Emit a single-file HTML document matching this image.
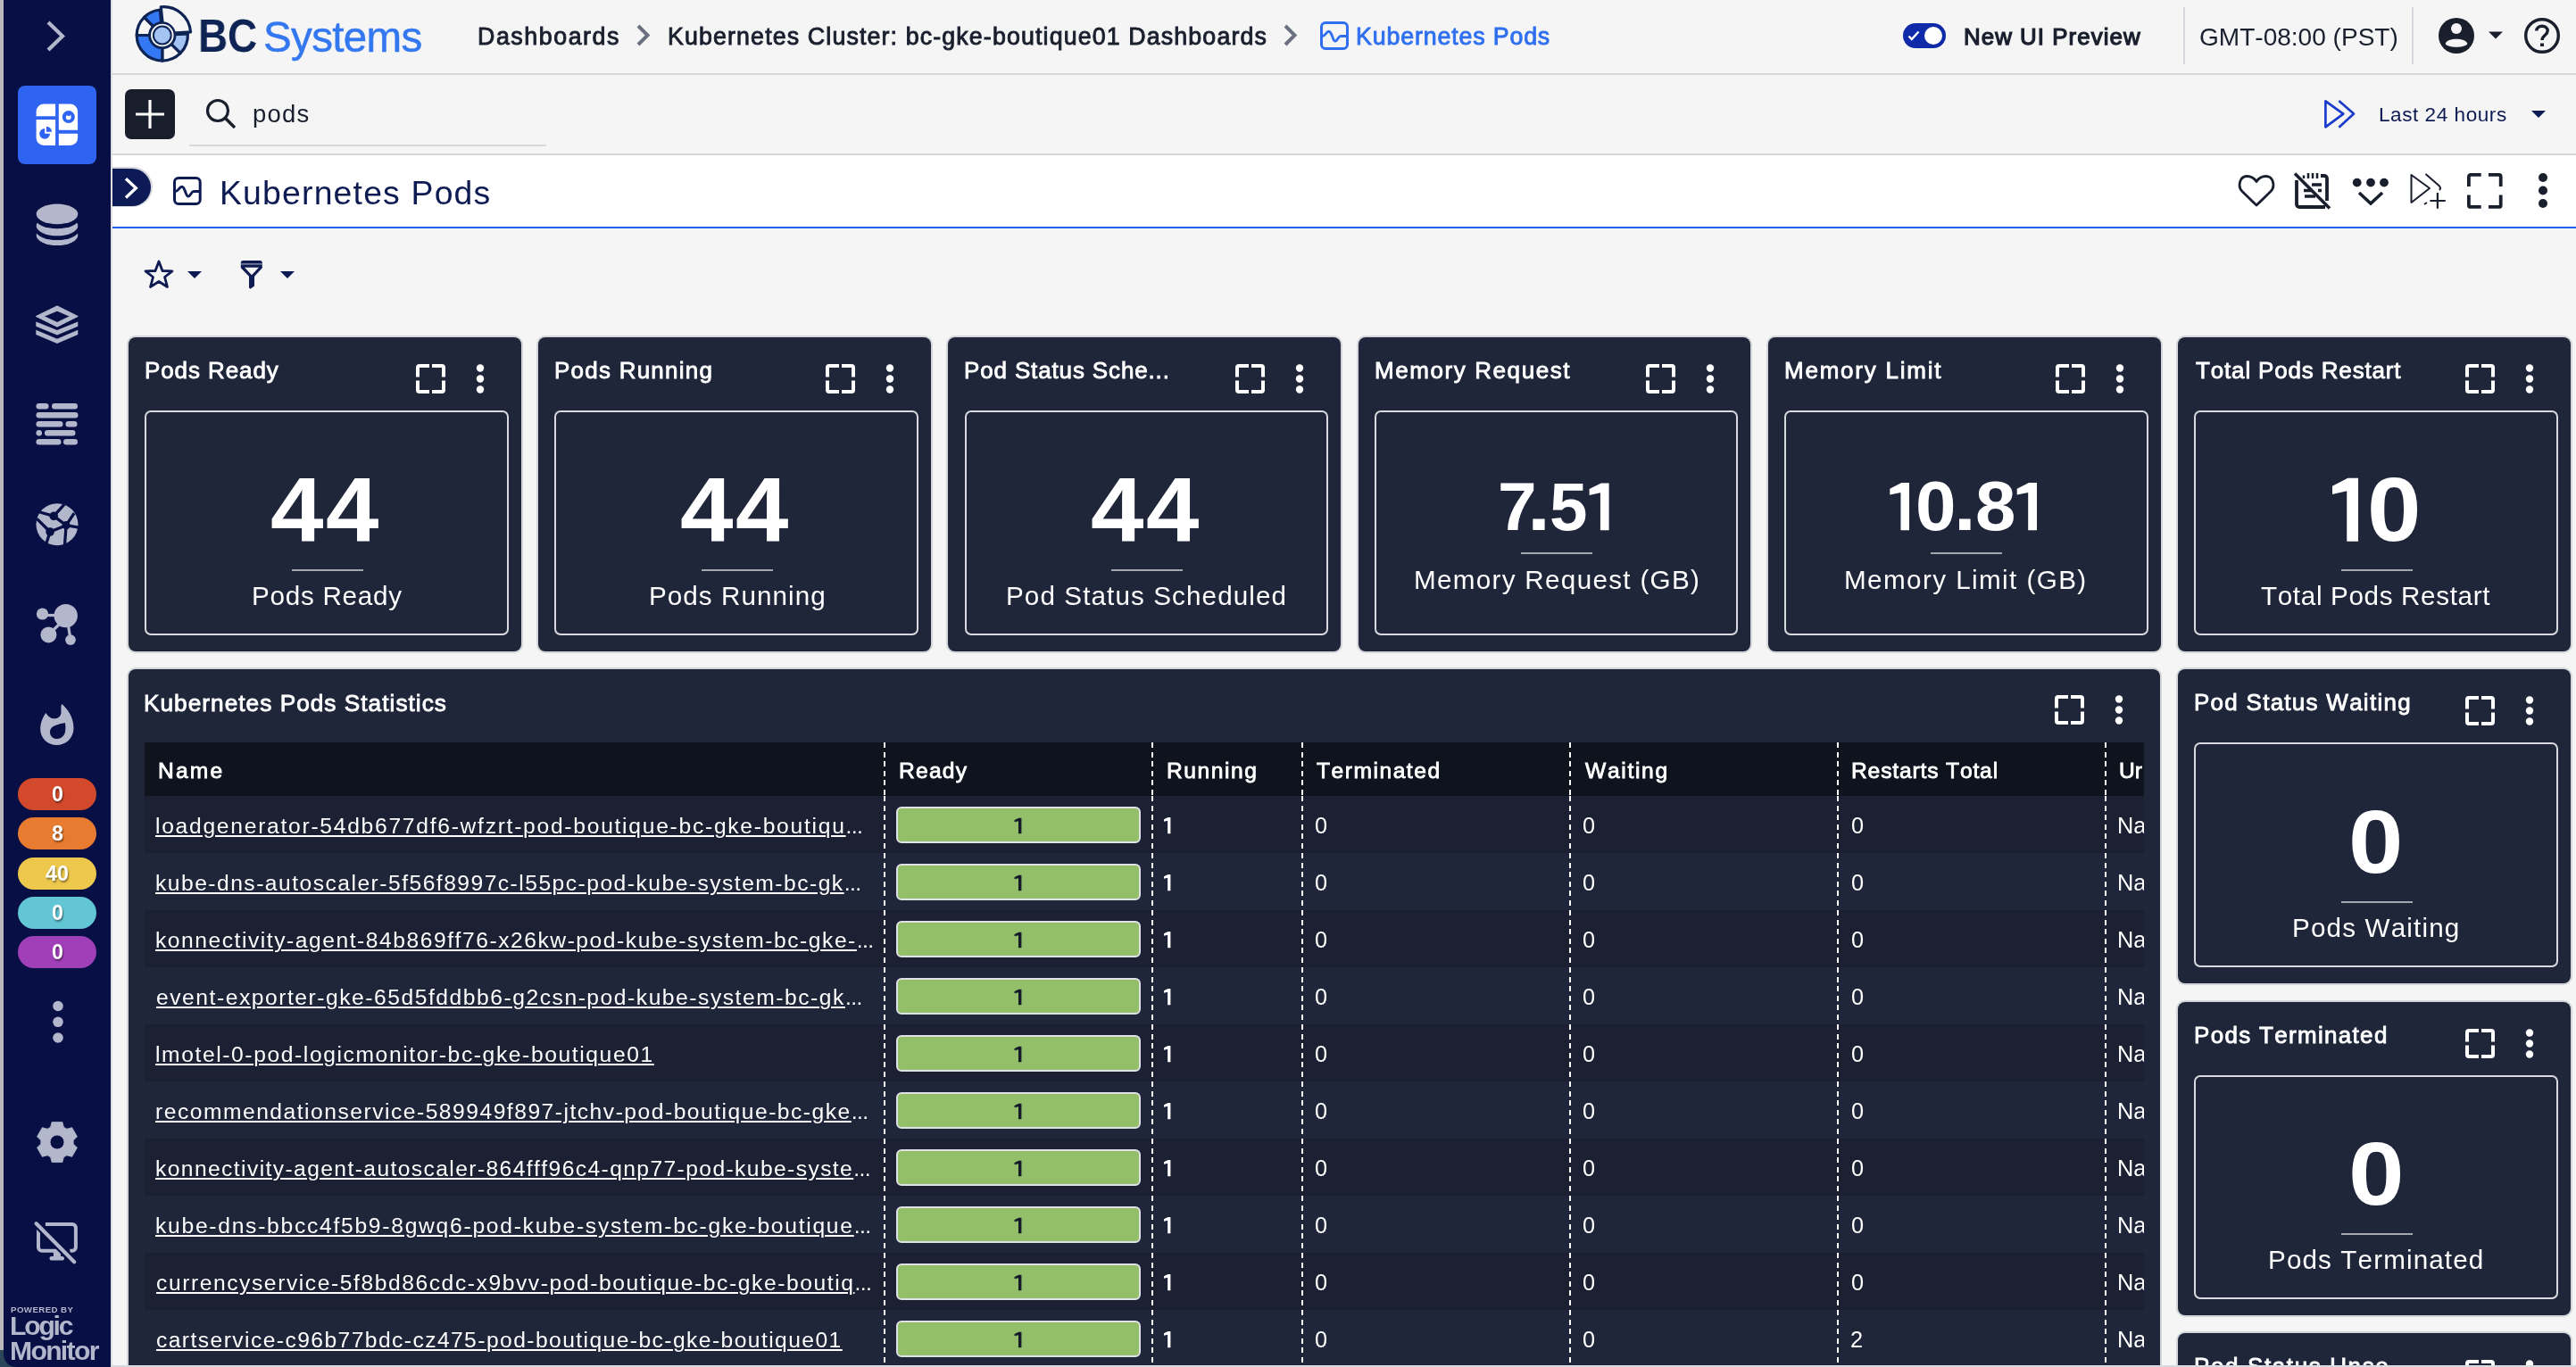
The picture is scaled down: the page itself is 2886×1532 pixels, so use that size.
<!DOCTYPE html>
<html><head><meta charset="utf-8"><style>
html,body{margin:0;padding:0;}
body{width:2886px;height:1532px;overflow:hidden;position:relative;background:#f5f5f5;font-family:"Liberation Sans",sans-serif;}
.t{position:absolute;white-space:nowrap;display:inline-block;font-kerning:none;will-change:transform;}
svg{overflow:visible}
</style></head><body>
<div style="position:absolute;left:0.00px;top:0.00px;width:4.00px;height:1532.00px;background:#b9b9bb"></div>
<div style="position:absolute;left:0.00px;top:1513.00px;width:24.00px;height:19.00px;background:#2b4659"></div>
<div style="position:absolute;left:4.00px;top:0.00px;width:120.00px;height:1532.00px;background:#070f45;border-bottom-left-radius:14px"></div>
<div style="position:absolute;left:124.00px;top:0.00px;width:2.00px;height:1532.00px;background:#dcdde2"></div>
<svg style="position:absolute;left:50.00px;top:22.00px" width="26" height="38" viewBox="0 0 26 38"><polyline points="4,3 20,18.5 4,34" fill="none" stroke="#b3b7cb" stroke-width="4.2"/></svg>
<div style="position:absolute;left:20.00px;top:96.00px;width:88.00px;height:88.00px;background:#2f64f2;border-radius:8px"></div>
<svg style="position:absolute;left:40.00px;top:116.00px" width="48" height="48" viewBox="0 0 48 48">
<path d="M9.1 0.6 H22.1 V14.2 H0.6 V9.1 A8.5 8.5 0 0 1 9.1 0.6Z" fill="#fff"/>
<path d="M0.6 18.1 H22.1 V47.1 H9.1 A8.5 8.5 0 0 1 0.6 38.6Z" fill="#fff"/>
<path d="M25.8 0.6 H38.6 A8.5 8.5 0 0 1 47.1 9.1 V29.8 H25.8Z" fill="#fff"/>
<path d="M25.8 33.7 H47.1 V38.6 A8.5 8.5 0 0 1 38.6 47.1 H25.8Z" fill="#fff"/>
<path d="M10.1 27.9 A5.9 5.9 0 1 0 16 33.8 L10.1 33.8Z" fill="#2f64f2"/>
<path d="M12 25.7 A6 6 0 0 1 18 31.7 L12 31.7Z" fill="#2f64f2"/>
<circle cx="36.8" cy="15.1" r="7" fill="#2f64f2"/>
<path d="M34.6 13.2 C33.3 15 33.6 18.3 36.8 18.3 C40 18.3 40.3 15 39 12.5 L38 14.2 Z" fill="#fff"/>
</svg>
<svg style="position:absolute;left:40.00px;top:227.00px" width="48" height="50" viewBox="0 0 48 50">
<ellipse cx="24" cy="36.8" rx="23.3" ry="11.3" fill="#b3b7cb"/>
<ellipse cx="24" cy="30.8" rx="24.5" ry="11.3" fill="#070f45"/>
<ellipse cx="24" cy="26" rx="23.3" ry="11.3" fill="#b3b7cb"/>
<ellipse cx="24" cy="17.9" rx="24.5" ry="11.3" fill="#070f45"/>
<ellipse cx="24" cy="12.9" rx="23.3" ry="11.3" fill="#b3b7cb"/>
</svg>
<svg style="position:absolute;left:40.00px;top:342.00px" width="48" height="46" viewBox="0 0 48 46">
<path d="M24 0.9 L47.3 12.5 L24 24.2 L0.3 12.5Z M24 6.2 L9.1 12.5 L24 19.5 L38.5 12.5Z" fill="#b3b7cb" fill-rule="evenodd" stroke="#b3b7cb" stroke-width="1" stroke-linejoin="round"/>
<path d="M0.3 18.4 L24 28.1 L47.3 18.4 V23.7 L24 33.4 L0.3 23.7Z" fill="#b3b7cb"/>
<path d="M0.3 27.7 L24 37.8 L47.3 27.7 V32.9 L24 43 L0.3 32.9Z" fill="#b3b7cb"/>
</svg>
<svg style="position:absolute;left:40.00px;top:451.00px" width="48" height="50" viewBox="0 0 48 50">
<g fill="#b3b7cb">
<rect x="0.5" y="1" width="14" height="6.5" rx="3.2"/><rect x="18" y="1" width="29" height="6.5" rx="3.2"/>
<rect x="0.5" y="11" width="47" height="6.5" rx="3.2"/>
<rect x="0.5" y="21" width="30" height="6.5" rx="3.2"/><rect x="33.5" y="21" width="13" height="6.5" rx="3.2"/>
<rect x="0.5" y="31" width="6.5" height="6.5" rx="3.2"/><rect x="10" y="31" width="34.5" height="6.5" rx="3.2"/>
<rect x="0.5" y="41" width="28" height="6.5" rx="3.2"/><rect x="31" y="41" width="16" height="6.5" rx="3.2"/>
</g></svg>
<svg style="position:absolute;left:40.00px;top:563.00px" width="48" height="50" viewBox="0 0 48 50">
<circle cx="24" cy="24.7" r="23.5" fill="#b3b7cb"/>
<g stroke="#070f45" stroke-width="3.3" fill="none" stroke-linecap="butt">
<path d="M20.2 15.4 L3 10.5 M20.2 15.4 L32 2.3 M20.2 15.4 L34.1 25.7 M34.1 25.7 L43.1 12.2 M34.1 25.7 L48 28.1 M34.1 25.7 L32.5 48 M34.1 25.7 L16.1 33 M16.1 33 L1.3 18.3 M16.1 33 L11.6 47"/>
</g>
<g fill="#070f45"><circle cx="20.2" cy="15.4" r="4.8"/><circle cx="34.1" cy="25.7" r="4.6"/><circle cx="16.1" cy="33" r="4.8"/></g>
</svg>
<svg style="position:absolute;left:40.00px;top:676.00px" width="48" height="48" viewBox="0 0 48 48">
<g fill="#b3b7cb">
<circle cx="33.7" cy="14.1" r="13.2"/><circle cx="7.5" cy="12" r="6.6"/><circle cx="14.4" cy="35.4" r="9"/><circle cx="39" cy="41.1" r="5.9"/>
</g>
<g stroke="#b3b7cb" stroke-width="3.2"><line x1="7.5" y1="13.5" x2="25" y2="13.5"/><line x1="14.4" y1="35.4" x2="26" y2="24"/><line x1="36.5" y1="25" x2="39" y2="41"/></g>
</svg>
<svg style="position:absolute;left:44.00px;top:788.00px" width="40" height="50" viewBox="0 0 40 50">
<path d="M25.3 1 C31 6 38.5 15 38.5 28 C38.5 39 30 47 19.5 47 C9 47 1.2 39 1.2 29 C1.2 22 4 15.5 7.4 10.9 C9.5 14.5 12.5 17.3 17 17.3 C22 17.3 24.5 14 24.5 10 C24.5 6 24 3 25.3 1Z M28.9 22 C29.5 26 29.8 30 28.5 34 C26.5 39 22 40 19 40 C14.5 40 12 36 12 32.5 C12 27 17 25 21 24 C24 23 26.5 22.5 28.9 22Z" fill="#b3b7cb" fill-rule="evenodd"/>
</svg>
<div style="position:absolute;left:20.00px;top:872.00px;width:88.00px;height:36.00px;background:#d24a2b;border-radius:18px"></div>
<div style="position:absolute;left:20.00px;top:916.00px;width:88.00px;height:36.00px;background:#e77c30;border-radius:18px"></div>
<div style="position:absolute;left:20.00px;top:961.00px;width:88.00px;height:36.00px;background:#edc84c;border-radius:18px"></div>
<div style="position:absolute;left:20.00px;top:1005.00px;width:88.00px;height:36.00px;background:#63c6d4;border-radius:18px"></div>
<div style="position:absolute;left:20.00px;top:1049.00px;width:88.00px;height:36.00px;background:#a13fb9;border-radius:18px"></div>
<span class="t" style="left:57.55px;top:879.21px;font-size:23.256px;line-height:23.256px;color:#fff;font-weight:bold;letter-spacing:0.000px;text-shadow:1px 2px 2px rgba(0,0,0,.45);">0</span>
<span class="t" style="left:57.52px;top:923.21px;font-size:23.256px;line-height:23.256px;color:#fff;font-weight:bold;letter-spacing:0.000px;text-shadow:1px 2px 2px rgba(0,0,0,.45);">8</span>
<span class="t" style="left:51.37px;top:968.21px;font-size:23.256px;line-height:23.256px;color:#fff;font-weight:bold;letter-spacing:0.000px;text-shadow:1px 2px 2px rgba(0,0,0,.45);">40</span>
<span class="t" style="left:57.55px;top:1012.21px;font-size:23.256px;line-height:23.256px;color:#fff;font-weight:bold;letter-spacing:0.000px;text-shadow:1px 2px 2px rgba(0,0,0,.45);">0</span>
<span class="t" style="left:57.55px;top:1056.21px;font-size:23.256px;line-height:23.256px;color:#fff;font-weight:bold;letter-spacing:0.000px;text-shadow:1px 2px 2px rgba(0,0,0,.45);">0</span>
<svg style="position:absolute;left:59.00px;top:1121.00px" width="12" height="50" viewBox="0 0 12 50"><g fill="#b3b7cb"><circle cx="6" cy="6.5" r="5.8"/><circle cx="6" cy="24.3" r="5.8"/><circle cx="6" cy="42" r="5.8"/></g></svg>
<svg style="position:absolute;left:40.00px;top:1256.00px" width="48" height="48" viewBox="0 0 48 48"><path fill="#b3b7cb" fill-rule="evenodd" stroke="#b3b7cb" stroke-width="0.8" stroke-linejoin="round" d="M16.56 7.28 L18.17 1.44 L29.83 1.44 L31.44 7.28 L34.76 9.19 L40.62 7.67 L46.45 17.77 L42.20 22.09 L42.20 25.91 L46.45 30.23 L40.62 40.33 L34.76 38.81 L31.44 40.72 L29.83 46.56 L18.17 46.56 L16.56 40.72 L13.24 38.81 L7.38 40.33 L1.55 30.23 L5.80 25.91 L5.80 22.09 L1.55 17.77 L7.38 7.67 L13.24 9.19Z M24 16.1 A7.9 7.9 0 1 0 24.01 16.1Z"/></svg>
<svg style="position:absolute;left:38.00px;top:1368.00px" width="50" height="50" viewBox="0 0 50 50">
<g fill="none" stroke="#b3b7cb" stroke-width="4">
<path d="M12.9 3.9 H43 A3.9 3.9 0 0 1 46.9 7.8 V29.8 A3.9 3.9 0 0 1 43 33.7 H40.3"/>
<path d="M5 7 V29.8 A3.9 3.9 0 0 0 8.9 33.7 H28.5"/>
</g>
<rect x="21.9" y="35" width="8.1" height="6" fill="#b3b7cb"/><rect x="17.5" y="40" width="16.5" height="4.5" rx="2" fill="#b3b7cb"/>
<line x1="2.6" y1="3.2" x2="45.2" y2="46.2" stroke="#070f45" stroke-width="9"/>
<line x1="2.6" y1="3.2" x2="45.2" y2="46.2" stroke="#b3b7cb" stroke-width="4.2" stroke-linecap="round"/>
</svg>
<span class="t" style="left:11.95px;top:1463.35px;font-size:9.738px;line-height:9.738px;color:#b3b7cb;font-weight:bold;letter-spacing:0.395px;">POWERED BY</span>
<span class="t" style="left:10.58px;top:1470.66px;font-size:30.160px;line-height:30.160px;color:#b3b7cb;font-weight:bold;letter-spacing:-2.230px;">Logic</span>
<span class="t" style="left:10.58px;top:1498.66px;font-size:30.160px;line-height:30.160px;color:#b3b7cb;font-weight:bold;letter-spacing:-1.696px;">Monitor</span>
<div style="position:absolute;left:126.00px;top:82.00px;width:2760.00px;height:2.00px;background:#d6d8dd"></div>
<svg style="position:absolute;left:148.00px;top:6.00px" width="68" height="68" viewBox="0 0 68 68"><g transform="translate(33.8,33.5)" stroke="#0e2454" stroke-width="3.2" stroke-linejoin="round"><path d="M-28.60 0.00 A28.60 28.60 0 0 1 -20.22 -20.22 L-9.90 -9.90 A14.00 14.00 0 0 0 -14.00 0.00 Z" fill="#f5f5f5"/><path d="M-20.22 -20.22 A28.60 28.60 0 0 1 -2.49 -28.49 L-1.22 -13.95 A14.00 14.00 0 0 0 -9.90 -9.90 Z" fill="#3478f5"/><path d="M28.56 -1.50 A28.60 28.60 0 0 1 20.22 20.22 L9.90 9.90 A14.00 14.00 0 0 0 13.98 -0.73 Z" fill="#a3c4f3"/><path d="M20.22 20.22 A28.60 28.60 0 0 1 0.00 28.60 L0.00 14.00 A14.00 14.00 0 0 0 9.90 9.90 Z" fill="#f5f5f5"/><path d="M0.00 28.60 A28.60 28.60 0 0 1 -28.60 0.00 L-14.00 0.00 A14.00 14.00 0 0 0 0.00 14.00 Z" fill="#3478f5"/><path d="M-1.56 -31.63 A30.20 30.20 0 0 1 31.73 -3.71 L11.58 -2.30 A10.00 10.00 0 0 0 0.55 -11.55 Z" fill="#f5f5f5"/>
<circle r="15.3" fill="#0e2454" stroke="none"/>
<circle r="12.8" fill="#f5f5f5" stroke="none"/>
<circle r="10.9" fill="#0e2454" stroke="none"/>
<circle r="8.9" fill="#a3c4f3" stroke="none"/>
</g></svg>
<span class="t" style="left:222.13px;top:15.40px;font-size:51.017px;line-height:51.017px;color:#0e2454;font-weight:bold;letter-spacing:0.000px;transform:scaleX(0.8987);transform-origin:0 0;">BC</span>
<span class="t" style="left:295.14px;top:18.42px;font-size:47.578px;line-height:47.578px;color:#3478f0;font-weight:normal;letter-spacing:-0.672px;-webkit-text-stroke:0.50px #3478f0;">Systems</span>
<span class="t" style="left:534.90px;top:28.33px;font-size:26.780px;line-height:26.780px;color:#1a1f2e;font-weight:normal;letter-spacing:1.563px;-webkit-text-stroke:0.90px #1a1f2e;">Dashboards</span>
<svg style="position:absolute;left:711.00px;top:26.00px" width="20" height="27" viewBox="0 0 20 27"><polyline points="4,3 14.5,13.5 4,24" fill="none" stroke="#6b7080" stroke-width="4"/></svg>
<span class="t" style="left:747.80px;top:28.33px;font-size:26.780px;line-height:26.780px;color:#1a1f2e;font-weight:normal;letter-spacing:1.136px;-webkit-text-stroke:0.90px #1a1f2e;">Kubernetes Cluster: bc-gke-boutique01 Dashboards</span>
<svg style="position:absolute;left:1436.00px;top:26.00px" width="20" height="27" viewBox="0 0 20 27"><polyline points="4,3 14.5,13.5 4,24" fill="none" stroke="#6b7080" stroke-width="4"/></svg>
<svg style="position:absolute;left:1478.00px;top:23.00px" width="34" height="34" viewBox="0 0 34 34"><rect x="2.5" y="2.5" width="29" height="29" rx="4.5" fill="none" stroke="#2f6ff0" stroke-width="3"/><path d="M3.9 17.3 C6.5 17.5 8 12.2 10.8 12.2 C14.5 12.2 14.8 23.1 17.8 23.1 C20.5 23.1 21 17.5 24 17.5 H30" fill="none" stroke="#2f6ff0" stroke-width="2.9"/></svg>
<span class="t" style="left:1519.30px;top:28.33px;font-size:26.780px;line-height:26.780px;color:#2f6ff0;font-weight:normal;letter-spacing:0.851px;-webkit-text-stroke:0.90px #2f6ff0;">Kubernetes Pods</span>
<div style="position:absolute;left:2132.00px;top:26.00px;width:48.00px;height:28.00px;background:#0f2aa8;border-radius:14px"></div>
<div style="position:absolute;left:2156.00px;top:30.00px;width:20.00px;height:20.00px;background:#fff;border-radius:10px"></div>
<svg style="position:absolute;left:2137.00px;top:34.00px" width="14" height="12" viewBox="0 0 14 12"><polyline points="1.5,6.5 4.8,10 12.5,1.5" fill="none" stroke="#fff" stroke-width="2.4"/></svg>
<span class="t" style="left:2199.78px;top:29.43px;font-size:25.828px;line-height:25.828px;color:#1a1f2e;font-weight:normal;letter-spacing:1.073px;-webkit-text-stroke:1.25px #1a1f2e;">New UI Preview</span>
<div style="position:absolute;left:2446.00px;top:8.00px;width:2.00px;height:64.00px;background:#d6d8dd"></div>
<span class="t" style="left:2463.89px;top:27.65px;font-size:28.052px;line-height:28.052px;color:#1a1f2e;font-weight:normal;letter-spacing:-0.003px;">GMT-08:00 (PST)</span>
<div style="position:absolute;left:2702.00px;top:8.00px;width:2.00px;height:64.00px;background:#d6d8dd"></div>
<svg style="position:absolute;left:2731.00px;top:19.00px" width="42" height="42" viewBox="0 0 42 42"><circle cx="21" cy="21" r="20" fill="#1a1f2e"/><circle cx="21" cy="13" r="6" fill="#f5f5f5"/><path d="M8.7 30 C10 23 32 23 33.3 30 C31 35 11 35 8.7 30Z" fill="#f5f5f5"/></svg>
<svg style="position:absolute;left:2787.00px;top:35.00px" width="18" height="10" viewBox="0 0 18 10"><path d="M1 0.5 H17 L9 8.5Z" fill="#1a1f2e"/></svg>
<svg style="position:absolute;left:2827.00px;top:19.00px" width="42" height="42" viewBox="0 0 42 42"><circle cx="21" cy="21" r="18.3" fill="none" stroke="#1a1f2e" stroke-width="3.4"/><path d="M14.8 15.5 C14.8 8.5 27.2 8.5 27.2 15.5 C27.2 20.5 21 20.5 21 26" fill="none" stroke="#1a1f2e" stroke-width="3.4"/><rect x="19" y="29.5" width="4" height="3.5" fill="#1a1f2e"/></svg>
<div style="position:absolute;left:126.00px;top:172.00px;width:2760.00px;height:2.00px;background:#d6d8dd"></div>
<div style="position:absolute;left:140.00px;top:100.00px;width:56.00px;height:56.00px;background:#191e2c;border-radius:7px"></div>
<svg style="position:absolute;left:151.00px;top:111.00px" width="34" height="34" viewBox="0 0 34 34"><path d="M17 1 V33 M1 17 H33" stroke="#fff" stroke-width="3.2"/></svg>
<svg style="position:absolute;left:230.00px;top:110.00px" width="36" height="36" viewBox="0 0 36 36"><circle cx="14" cy="14" r="11.5" fill="none" stroke="#1a1f2e" stroke-width="3.2"/><line x1="22.5" y1="22.5" x2="33" y2="33" stroke="#1a1f2e" stroke-width="3.4"/></svg>
<span class="t" style="left:283.23px;top:114.35px;font-size:27.462px;line-height:27.462px;color:#1a1f2e;font-weight:normal;letter-spacing:1.237px;">pods</span>
<div style="position:absolute;left:212.00px;top:162.00px;width:400.00px;height:2.00px;background:#d6d8dd"></div>
<svg style="position:absolute;left:2602.00px;top:111.00px" width="38" height="34" viewBox="0 0 38 34"><path d="M3.4 2.3 L23.3 16.6 L3.4 31.3Z" fill="none" stroke="#1b3cc9" stroke-width="2.7" stroke-linejoin="round"/><polyline points="18.4,2 35,16.6 18.4,31.8" fill="none" stroke="#1b3cc9" stroke-width="2.7" stroke-linejoin="round"/></svg>
<span class="t" style="left:2664.75px;top:118.09px;font-size:22.566px;line-height:22.566px;color:#0d1b52;font-weight:normal;letter-spacing:0.544px;">Last 24 hours</span>
<svg style="position:absolute;left:2835.00px;top:123.00px" width="18" height="10" viewBox="0 0 18 10"><path d="M1 1 H17 L9 9Z" fill="#0d1b52"/></svg>
<div style="position:absolute;left:126.00px;top:174.00px;width:2760.00px;height:80.00px;background:#fff"></div>
<div style="position:absolute;left:126.00px;top:254.00px;width:2760.00px;height:2.00px;background:#2160f0"></div>
<div style="position:absolute;left:124.00px;top:187.40px;width:46.60px;height:45.00px;background:#d6d7dc;border-radius:0 23px 23px 0"></div>
<div style="position:absolute;left:124.00px;top:189.00px;width:44.90px;height:41.80px;background:#0c1a55;border-radius:0 21px 21px 0"></div>
<div style="position:absolute;left:124.00px;top:174.00px;width:1.50px;height:80.00px;background:#e0e0e4"></div>
<svg style="position:absolute;left:136.00px;top:196.00px" width="20" height="28" viewBox="0 0 20 28"><polyline points="5,4.2 16.3,14.8 5,25.4" fill="none" stroke="#fff" stroke-width="3.4"/></svg>
<svg style="position:absolute;left:193.00px;top:197.00px" width="34" height="34" viewBox="0 0 34 34"><rect x="2.5" y="2.5" width="28.7" height="28.9" rx="4.5" fill="none" stroke="#0d1b52" stroke-width="3"/><path d="M3.9 17.3 C6.5 17.5 8 12.2 10.8 12.2 C14.5 12.2 14.8 23.1 17.8 23.1 C20.5 23.1 21 17.5 24 17.5 H30" fill="none" stroke="#0d1b52" stroke-width="2.9"/></svg>
<span class="t" style="left:245.73px;top:197.55px;font-size:37.383px;line-height:37.383px;color:#0d1b52;font-weight:normal;letter-spacing:1.180px;">Kubernetes Pods</span>
<svg style="position:absolute;left:2506.00px;top:194.00px" width="44" height="40" viewBox="0 0 44 40"><path d="M22 36 L6 20.5 C1 15.5 2.5 3.5 11.5 3.5 C16.5 3.5 20 6.5 22 9.5 C24 6.5 27.5 3.5 32.5 3.5 C41.5 3.5 43 15.5 38 20.5Z" fill="none" stroke="#1a1f2e" stroke-width="2.8" stroke-linejoin="round"/></svg>
<svg style="position:absolute;left:2569.00px;top:192.00px" width="44" height="44" viewBox="0 0 44 44"><g fill="none" stroke="#1a1f2e"><path d="M31 5 H35 A3 3 0 0 1 38 8 V33" stroke-width="3.8"/><path d="M4 10 V37 A3 3 0 0 0 7 40 H36" stroke-width="3.8"/>
<path d="M12 4.5 V8 M17 2 V8 M22 2 V8 M27 2 V8" stroke-width="2.5"/><path d="M13 28 H25 M12 21.5 H22 M21 15 H32 M28 21.5 H32" stroke-width="3.4"/>
<line x1="2" y1="2.5" x2="41" y2="41.5" stroke-width="3.6"/></g></svg>
<svg style="position:absolute;left:2635.00px;top:198.00px" width="44" height="34" viewBox="0 0 44 34"><g fill="#1a1f2e"><circle cx="5.7" cy="6.6" r="4.9"/><circle cx="21" cy="6.6" r="4.9"/><circle cx="36" cy="6.6" r="4.9"/></g><polyline points="8,18 21,30 34,18" fill="none" stroke="#1a1f2e" stroke-width="3.6"/></svg>
<svg style="position:absolute;left:2699.00px;top:194.00px" width="44" height="42" viewBox="0 0 44 42"><g fill="none" stroke="#1a1f2e" stroke-width="2"><path d="M2.5 2 L23 17 L2.5 33Z" stroke-linejoin="round"/><path d="M18.5 1 L34 14.5 Q36 17 34 19" /><path d="M17 35 L20 33"/><path d="M23.4 31 H40.8 M31.9 22 V39.8" stroke-width="2.2"/></g></svg>
<svg style="position:absolute;left:2764.00px;top:194.00px" width="42" height="42" viewBox="0 0 42 42"><path d="M1.9 15 V3.9 A2 2 0 0 1 3.9 1.9 H15.7 M24 1.9 H35.7 A2 2 0 0 1 37.7 3.9 V15 M37.7 24.6 V35.9 A2 2 0 0 1 35.7 37.9 H24 M15.7 37.9 H3.9 A2 2 0 0 1 1.9 35.9 V24.6" fill="none" stroke="#1a1f2e" stroke-width="3.8"/></svg>
<svg style="position:absolute;left:2843.00px;top:193.00px" width="12" height="42" viewBox="0 0 12 42"><g fill="#1a1f2e"><circle cx="6" cy="6" r="5"/><circle cx="6" cy="20.5" r="5"/><circle cx="6" cy="35" r="5"/></g></svg>
<svg style="position:absolute;left:160.00px;top:290.00px" width="36" height="36" viewBox="0 0 36 36"><path d="M18 3 L22 13.5 L33 13.8 L24.5 20.5 L27.5 31.5 L18 25.5 L8.5 31.5 L11.5 20.5 L3 13.8 L14 13.5Z" fill="none" stroke="#0d1b52" stroke-width="2.8" stroke-linejoin="round"/></svg>
<svg style="position:absolute;left:209.00px;top:303.00px" width="18" height="10" viewBox="0 0 18 10"><path d="M1 1 H17 L9 9Z" fill="#0d1b52"/></svg>
<svg style="position:absolute;left:268.00px;top:290.00px" width="28" height="36" viewBox="0 0 28 36"><path d="M1.8 4.5 A2.5 2.5 0 0 1 4.3 2 H23.3 A2.5 2.5 0 0 1 25.8 4.5 V10.3 L17 19.8 V30.5 L12.6 33.8 L11 32.4 V19.8 L1.8 10.3Z M6 9.7 L14 18.3 L22 9.7Z" fill="#0d1b52" fill-rule="evenodd"/><rect x="1.8" y="5.5" width="24" height="0.9" fill="#cfd1db"/></svg>
<svg style="position:absolute;left:313.00px;top:303.00px" width="18" height="10" viewBox="0 0 18 10"><path d="M1 1 H17 L9 9Z" fill="#0d1b52"/></svg>
<div style="position:absolute;left:144.00px;top:378.00px;width:439.80px;height:351.70px;background:#1f263a;border-radius:8px;box-shadow:0 0 0 2px #d3d5da"></div>
<span class="t" style="left:161.97px;top:403.42px;font-size:25.964px;line-height:25.964px;color:#fff;font-weight:normal;letter-spacing:0.937px;-webkit-text-stroke:0.85px #fff;">Pods Ready</span>
<svg style="position:absolute;left:466.00px;top:408.00px" width="33" height="33" viewBox="0 0 33 33"><path d="M2 14.5 V4 A2 2 0 0 1 4 2 H15 M18 2 H29 A2 2 0 0 1 31 4 V14.5 M31 18.5 V29 A2 2 0 0 1 29 31 H18 M15 31 H4 A2 2 0 0 1 2 29 V18.5" fill="none" stroke="#fff" stroke-width="4"/></svg>
<svg style="position:absolute;left:533.00px;top:408.00px" width="10" height="33" viewBox="0 0 10 33"><g fill="#fff"><circle cx="5" cy="4.5" r="4.2"/><circle cx="5" cy="16.5" r="4.2"/><circle cx="5" cy="28.5" r="4.2"/></g></svg>
<div style="position:absolute;left:162.20px;top:460.00px;width:407.50px;height:251.80px;border:2px solid #d9dadf;border-radius:7px;box-sizing:border-box"></div>
<div style="position:absolute;left:326.50px;top:637.90px;width:80.00px;height:2.20px;background:#a4a7b0"></div>
<span class="t" style="left:281.77px;top:653.31px;font-size:29.634px;line-height:29.634px;color:#fff;font-weight:normal;letter-spacing:0.728px;">Pods Ready</span>
<div style="position:absolute;left:603.20px;top:378.00px;width:439.80px;height:351.70px;background:#1f263a;border-radius:8px;box-shadow:0 0 0 2px #d3d5da"></div>
<span class="t" style="left:621.17px;top:403.42px;font-size:25.964px;line-height:25.964px;color:#fff;font-weight:normal;letter-spacing:1.254px;-webkit-text-stroke:0.85px #fff;">Pods Running</span>
<svg style="position:absolute;left:925.20px;top:408.00px" width="33" height="33" viewBox="0 0 33 33"><path d="M2 14.5 V4 A2 2 0 0 1 4 2 H15 M18 2 H29 A2 2 0 0 1 31 4 V14.5 M31 18.5 V29 A2 2 0 0 1 29 31 H18 M15 31 H4 A2 2 0 0 1 2 29 V18.5" fill="none" stroke="#fff" stroke-width="4"/></svg>
<svg style="position:absolute;left:992.20px;top:408.00px" width="10" height="33" viewBox="0 0 10 33"><g fill="#fff"><circle cx="5" cy="4.5" r="4.2"/><circle cx="5" cy="16.5" r="4.2"/><circle cx="5" cy="28.5" r="4.2"/></g></svg>
<div style="position:absolute;left:621.40px;top:460.00px;width:407.50px;height:251.80px;border:2px solid #d9dadf;border-radius:7px;box-sizing:border-box"></div>
<div style="position:absolute;left:785.70px;top:637.90px;width:80.00px;height:2.20px;background:#a4a7b0"></div>
<span class="t" style="left:726.87px;top:653.31px;font-size:29.634px;line-height:29.634px;color:#fff;font-weight:normal;letter-spacing:1.052px;">Pods Running</span>
<div style="position:absolute;left:1062.40px;top:378.00px;width:439.80px;height:351.70px;background:#1f263a;border-radius:8px;box-shadow:0 0 0 2px #d3d5da"></div>
<span class="t" style="left:1080.37px;top:403.42px;font-size:25.964px;line-height:25.964px;color:#fff;font-weight:normal;letter-spacing:0.879px;-webkit-text-stroke:0.85px #fff;">Pod Status Sche...</span>
<svg style="position:absolute;left:1384.40px;top:408.00px" width="33" height="33" viewBox="0 0 33 33"><path d="M2 14.5 V4 A2 2 0 0 1 4 2 H15 M18 2 H29 A2 2 0 0 1 31 4 V14.5 M31 18.5 V29 A2 2 0 0 1 29 31 H18 M15 31 H4 A2 2 0 0 1 2 29 V18.5" fill="none" stroke="#fff" stroke-width="4"/></svg>
<svg style="position:absolute;left:1451.40px;top:408.00px" width="10" height="33" viewBox="0 0 10 33"><g fill="#fff"><circle cx="5" cy="4.5" r="4.2"/><circle cx="5" cy="16.5" r="4.2"/><circle cx="5" cy="28.5" r="4.2"/></g></svg>
<div style="position:absolute;left:1080.60px;top:460.00px;width:407.50px;height:251.80px;border:2px solid #d9dadf;border-radius:7px;box-sizing:border-box"></div>
<div style="position:absolute;left:1244.90px;top:637.90px;width:80.00px;height:2.20px;background:#a4a7b0"></div>
<span class="t" style="left:1127.17px;top:653.31px;font-size:29.634px;line-height:29.634px;color:#fff;font-weight:normal;letter-spacing:1.099px;">Pod Status Scheduled</span>
<div style="position:absolute;left:1521.60px;top:378.00px;width:439.80px;height:351.70px;background:#1f263a;border-radius:8px;box-shadow:0 0 0 2px #d3d5da"></div>
<span class="t" style="left:1539.57px;top:403.42px;font-size:25.964px;line-height:25.964px;color:#fff;font-weight:normal;letter-spacing:1.610px;-webkit-text-stroke:0.85px #fff;">Memory Request</span>
<svg style="position:absolute;left:1843.60px;top:408.00px" width="33" height="33" viewBox="0 0 33 33"><path d="M2 14.5 V4 A2 2 0 0 1 4 2 H15 M18 2 H29 A2 2 0 0 1 31 4 V14.5 M31 18.5 V29 A2 2 0 0 1 29 31 H18 M15 31 H4 A2 2 0 0 1 2 29 V18.5" fill="none" stroke="#fff" stroke-width="4"/></svg>
<svg style="position:absolute;left:1910.60px;top:408.00px" width="10" height="33" viewBox="0 0 10 33"><g fill="#fff"><circle cx="5" cy="4.5" r="4.2"/><circle cx="5" cy="16.5" r="4.2"/><circle cx="5" cy="28.5" r="4.2"/></g></svg>
<div style="position:absolute;left:1539.80px;top:460.00px;width:407.50px;height:251.80px;border:2px solid #d9dadf;border-radius:7px;box-sizing:border-box"></div>
<div style="position:absolute;left:1704.10px;top:619.00px;width:80.00px;height:2.20px;background:#a4a7b0"></div>
<span class="t" style="left:1584.07px;top:634.61px;font-size:29.634px;line-height:29.634px;color:#fff;font-weight:normal;letter-spacing:1.308px;">Memory Request (GB)</span>
<div style="position:absolute;left:1980.80px;top:378.00px;width:439.80px;height:351.70px;background:#1f263a;border-radius:8px;box-shadow:0 0 0 2px #d3d5da"></div>
<span class="t" style="left:1998.77px;top:403.42px;font-size:25.964px;line-height:25.964px;color:#fff;font-weight:normal;letter-spacing:1.802px;-webkit-text-stroke:0.85px #fff;">Memory Limit</span>
<svg style="position:absolute;left:2302.80px;top:408.00px" width="33" height="33" viewBox="0 0 33 33"><path d="M2 14.5 V4 A2 2 0 0 1 4 2 H15 M18 2 H29 A2 2 0 0 1 31 4 V14.5 M31 18.5 V29 A2 2 0 0 1 29 31 H18 M15 31 H4 A2 2 0 0 1 2 29 V18.5" fill="none" stroke="#fff" stroke-width="4"/></svg>
<svg style="position:absolute;left:2369.80px;top:408.00px" width="10" height="33" viewBox="0 0 10 33"><g fill="#fff"><circle cx="5" cy="4.5" r="4.2"/><circle cx="5" cy="16.5" r="4.2"/><circle cx="5" cy="28.5" r="4.2"/></g></svg>
<div style="position:absolute;left:1999.00px;top:460.00px;width:407.50px;height:251.80px;border:2px solid #d9dadf;border-radius:7px;box-sizing:border-box"></div>
<div style="position:absolute;left:2163.30px;top:619.00px;width:80.00px;height:2.20px;background:#a4a7b0"></div>
<span class="t" style="left:2066.17px;top:634.61px;font-size:29.634px;line-height:29.634px;color:#fff;font-weight:normal;letter-spacing:1.416px;">Memory Limit (GB)</span>
<div style="position:absolute;left:2440.00px;top:378.00px;width:439.80px;height:351.70px;background:#1f263a;border-radius:8px;box-shadow:0 0 0 2px #d3d5da"></div>
<span class="t" style="left:2459.52px;top:403.42px;font-size:25.964px;line-height:25.964px;color:#fff;font-weight:normal;letter-spacing:0.862px;-webkit-text-stroke:0.85px #fff;">Total Pods Restart</span>
<svg style="position:absolute;left:2762.00px;top:408.00px" width="33" height="33" viewBox="0 0 33 33"><path d="M2 14.5 V4 A2 2 0 0 1 4 2 H15 M18 2 H29 A2 2 0 0 1 31 4 V14.5 M31 18.5 V29 A2 2 0 0 1 29 31 H18 M15 31 H4 A2 2 0 0 1 2 29 V18.5" fill="none" stroke="#fff" stroke-width="4"/></svg>
<svg style="position:absolute;left:2829.00px;top:408.00px" width="10" height="33" viewBox="0 0 10 33"><g fill="#fff"><circle cx="5" cy="4.5" r="4.2"/><circle cx="5" cy="16.5" r="4.2"/><circle cx="5" cy="28.5" r="4.2"/></g></svg>
<div style="position:absolute;left:2458.20px;top:460.00px;width:407.50px;height:251.80px;border:2px solid #d9dadf;border-radius:7px;box-sizing:border-box"></div>
<div style="position:absolute;left:2622.50px;top:637.90px;width:80.00px;height:2.20px;background:#a4a7b0"></div>
<span class="t" style="left:2533.33px;top:653.31px;font-size:29.634px;line-height:29.634px;color:#fff;font-weight:normal;letter-spacing:0.651px;">Total Pods Restart</span>
<span class="t" style="left:303.28px;top:520.75px;font-size:101.746px;line-height:101.746px;color:#fff;font-weight:bold;transform:scaleX(1.0514);transform-origin:0 0">4</span>
<span class="t" style="left:365.18px;top:520.75px;font-size:101.746px;line-height:101.746px;color:#fff;font-weight:bold;transform:scaleX(1.0495);transform-origin:0 0">4</span>
<span class="t" style="left:762.48px;top:520.75px;font-size:101.746px;line-height:101.746px;color:#fff;font-weight:bold;transform:scaleX(1.0514);transform-origin:0 0">4</span>
<span class="t" style="left:824.38px;top:520.75px;font-size:101.746px;line-height:101.746px;color:#fff;font-weight:bold;transform:scaleX(1.0495);transform-origin:0 0">4</span>
<span class="t" style="left:1221.68px;top:520.75px;font-size:101.746px;line-height:101.746px;color:#fff;font-weight:bold;transform:scaleX(1.0514);transform-origin:0 0">4</span>
<span class="t" style="left:1283.58px;top:520.75px;font-size:101.746px;line-height:101.746px;color:#fff;font-weight:bold;transform:scaleX(1.0495);transform-origin:0 0">4</span>
<span class="t" style="left:1678.33px;top:529.97px;font-size:76.455px;line-height:76.455px;color:#fff;font-weight:bold;transform:scaleX(1.0258);transform-origin:0 0">7</span>
<span class="t" style="left:1711.05px;top:524.77px;font-size:82.591px;line-height:82.591px;color:#fff;font-weight:bold;transform:scaleX(1.1326);transform-origin:0 0">.</span>
<span class="t" style="left:1735.55px;top:529.98px;font-size:76.388px;line-height:76.388px;color:#fff;font-weight:bold;transform:scaleX(0.9998);transform-origin:0 0">5</span>
<svg style="position:absolute;left:0;top:0;overflow:visible" width="1" height="1"><polygon points="1793.80,541.50 1802.60,541.50 1802.60,594.30 1792.92,594.30 1792.92,552.32 1780.60,554.96 1780.60,548.10" fill="#fff"/></svg>
<svg style="position:absolute;left:0;top:0;overflow:visible" width="1" height="1"><polygon points="2130.32,541.00 2139.00,541.00 2139.00,594.30 2129.45,594.30 2129.45,551.93 2117.30,554.59 2117.30,547.66" fill="#fff"/></svg>
<span class="t" style="left:2146.46px;top:529.47px;font-size:76.977px;line-height:76.977px;color:#fff;font-weight:bold;transform:scaleX(1.0626);transform-origin:0 0">0</span>
<span class="t" style="left:2189.39px;top:524.77px;font-size:82.591px;line-height:82.591px;color:#fff;font-weight:bold;transform:scaleX(1.0725);transform-origin:0 0">.</span>
<span class="t" style="left:2212.71px;top:529.47px;font-size:76.977px;line-height:76.977px;color:#fff;font-weight:bold;transform:scaleX(1.0605);transform-origin:0 0">8</span>
<svg style="position:absolute;left:0;top:0;overflow:visible" width="1" height="1"><polygon points="2273.08,541.00 2282.00,541.00 2282.00,594.30 2272.19,594.30 2272.19,551.93 2259.70,554.59 2259.70,547.66" fill="#fff"/></svg>
<svg style="position:absolute;left:0;top:0;overflow:visible" width="1" height="1"><polygon points="2630.40,535.80 2642.00,535.80 2642.00,606.70 2629.24,606.70 2629.24,550.33 2613.00,553.88 2613.00,544.66" fill="#fff"/></svg>
<span class="t" style="left:2651.60px;top:520.20px;font-size:102.400px;line-height:102.400px;color:#fff;font-weight:bold;transform:scaleX(1.0616);transform-origin:0 0">0</span>
<div style="position:absolute;left:2440.00px;top:750.00px;width:439.80px;height:351.70px;background:#1f263a;border-radius:8px;box-shadow:0 0 0 2px #d3d5da"></div>
<span class="t" style="left:2457.97px;top:775.42px;font-size:25.964px;line-height:25.964px;color:#fff;font-weight:normal;letter-spacing:1.288px;-webkit-text-stroke:0.85px #fff;">Pod Status Waiting</span>
<svg style="position:absolute;left:2762.00px;top:780.00px" width="33" height="33" viewBox="0 0 33 33"><path d="M2 14.5 V4 A2 2 0 0 1 4 2 H15 M18 2 H29 A2 2 0 0 1 31 4 V14.5 M31 18.5 V29 A2 2 0 0 1 29 31 H18 M15 31 H4 A2 2 0 0 1 2 29 V18.5" fill="none" stroke="#fff" stroke-width="4"/></svg>
<svg style="position:absolute;left:2829.00px;top:780.00px" width="10" height="33" viewBox="0 0 10 33"><g fill="#fff"><circle cx="5" cy="4.5" r="4.2"/><circle cx="5" cy="16.5" r="4.2"/><circle cx="5" cy="28.5" r="4.2"/></g></svg>
<div style="position:absolute;left:2458.20px;top:832.00px;width:407.50px;height:251.80px;border:2px solid #d9dadf;border-radius:7px;box-sizing:border-box"></div>
<div style="position:absolute;left:2622.50px;top:1009.50px;width:80.00px;height:2.20px;background:#a4a7b0"></div>
<span class="t" style="left:2568.27px;top:1025.31px;font-size:29.634px;line-height:29.634px;color:#fff;font-weight:normal;letter-spacing:1.159px;">Pods Waiting</span>
<span class="t" style="left:2631.13px;top:892.89px;font-size:100.423px;line-height:100.423px;color:#fff;font-weight:bold;transform:scaleX(1.0993);transform-origin:0 0">0</span>
<div style="position:absolute;left:2440.00px;top:1122.50px;width:439.80px;height:351.70px;background:#1f263a;border-radius:8px;box-shadow:0 0 0 2px #d3d5da"></div>
<span class="t" style="left:2457.97px;top:1147.92px;font-size:25.964px;line-height:25.964px;color:#fff;font-weight:normal;letter-spacing:1.335px;-webkit-text-stroke:0.85px #fff;">Pods Terminated</span>
<svg style="position:absolute;left:2762.00px;top:1152.50px" width="33" height="33" viewBox="0 0 33 33"><path d="M2 14.5 V4 A2 2 0 0 1 4 2 H15 M18 2 H29 A2 2 0 0 1 31 4 V14.5 M31 18.5 V29 A2 2 0 0 1 29 31 H18 M15 31 H4 A2 2 0 0 1 2 29 V18.5" fill="none" stroke="#fff" stroke-width="4"/></svg>
<svg style="position:absolute;left:2829.00px;top:1152.50px" width="10" height="33" viewBox="0 0 10 33"><g fill="#fff"><circle cx="5" cy="4.5" r="4.2"/><circle cx="5" cy="16.5" r="4.2"/><circle cx="5" cy="28.5" r="4.2"/></g></svg>
<div style="position:absolute;left:2458.20px;top:1204.50px;width:407.50px;height:251.80px;border:2px solid #d9dadf;border-radius:7px;box-sizing:border-box"></div>
<div style="position:absolute;left:2622.50px;top:1381.80px;width:80.00px;height:2.20px;background:#a4a7b0"></div>
<span class="t" style="left:2541.37px;top:1397.31px;font-size:29.634px;line-height:29.634px;color:#fff;font-weight:normal;letter-spacing:1.120px;">Pods Terminated</span>
<span class="t" style="left:2630.94px;top:1266.36px;font-size:99.293px;line-height:99.293px;color:#fff;font-weight:bold;transform:scaleX(1.1351);transform-origin:0 0">0</span>
<div style="position:absolute;left:2440.00px;top:1494.00px;width:439.80px;height:200.00px;background:#1f263a;border-radius:8px;box-shadow:0 0 0 2px #d3d5da"></div>
<span class="t" style="left:2457.97px;top:1519.42px;font-size:25.964px;line-height:25.964px;color:#fff;font-weight:normal;letter-spacing:1.642px;-webkit-text-stroke:0.85px #fff;">Pod Status Unse...</span>
<svg style="position:absolute;left:2762.00px;top:1524.00px" width="33" height="33" viewBox="0 0 33 33"><path d="M2 14.5 V4 A2 2 0 0 1 4 2 H15 M18 2 H29 A2 2 0 0 1 31 4 V14.5 M31 18.5 V29 A2 2 0 0 1 29 31 H18 M15 31 H4 A2 2 0 0 1 2 29 V18.5" fill="none" stroke="#fff" stroke-width="4"/></svg>
<svg style="position:absolute;left:2829.00px;top:1524.00px" width="10" height="33" viewBox="0 0 10 33"><g fill="#fff"><circle cx="5" cy="4.5" r="4.2"/><circle cx="5" cy="16.5" r="4.2"/><circle cx="5" cy="28.5" r="4.2"/></g></svg>
<div style="position:absolute;left:144.00px;top:750.00px;width:2276.00px;height:900.00px;background:#1f263a;border-radius:8px;box-shadow:0 0 0 2px #d3d5da"></div>
<span class="t" style="left:160.85px;top:775.19px;font-size:26.236px;line-height:26.236px;color:#fff;font-weight:normal;letter-spacing:1.023px;-webkit-text-stroke:0.85px #fff;">Kubernetes Pods Statistics</span>
<svg style="position:absolute;left:2301.50px;top:779.00px" width="33" height="33" viewBox="0 0 33 33"><path d="M2 14.5 V4 A2 2 0 0 1 4 2 H15 M18 2 H29 A2 2 0 0 1 31 4 V14.5 M31 18.5 V29 A2 2 0 0 1 29 31 H18 M15 31 H4 A2 2 0 0 1 2 29 V18.5" fill="none" stroke="#fff" stroke-width="4"/></svg>
<svg style="position:absolute;left:2369.00px;top:779.00px" width="10" height="33" viewBox="0 0 10 33"><g fill="#fff"><circle cx="5" cy="4.5" r="4.2"/><circle cx="5" cy="16.5" r="4.2"/><circle cx="5" cy="28.5" r="4.2"/></g></svg>
<div style="position:absolute;left:162.00px;top:832.00px;width:2240.00px;height:60.00px;background:#0f131e"></div>
<span class="t" style="left:176.98px;top:851.87px;font-size:24.605px;line-height:24.605px;color:#fff;font-weight:normal;letter-spacing:2.160px;-webkit-text-stroke:0.85px #fff;">Name</span>
<span class="t" style="left:1006.98px;top:851.87px;font-size:24.605px;line-height:24.605px;color:#fff;font-weight:normal;letter-spacing:1.236px;-webkit-text-stroke:0.85px #fff;">Ready</span>
<span class="t" style="left:1306.68px;top:851.87px;font-size:24.605px;line-height:24.605px;color:#fff;font-weight:normal;letter-spacing:1.542px;-webkit-text-stroke:0.85px #fff;">Running</span>
<span class="t" style="left:1475.45px;top:851.87px;font-size:24.605px;line-height:24.605px;color:#fff;font-weight:normal;letter-spacing:1.522px;-webkit-text-stroke:0.85px #fff;">Terminated</span>
<span class="t" style="left:1775.89px;top:851.87px;font-size:24.605px;line-height:24.605px;color:#fff;font-weight:normal;letter-spacing:1.692px;-webkit-text-stroke:0.85px #fff;">Waiting</span>
<span class="t" style="left:2074.48px;top:851.87px;font-size:24.605px;line-height:24.605px;color:#fff;font-weight:normal;letter-spacing:0.848px;-webkit-text-stroke:0.85px #fff;">Restarts Total</span>
<span class="t" style="left:2374.10px;top:851.87px;font-size:24.605px;line-height:24.605px;color:#fff;font-weight:normal;letter-spacing:0.000px;-webkit-text-stroke:0.85px #fff;">Ur</span>
<div style="position:absolute;left:162.00px;top:892.00px;width:2240.00px;height:64.00px;background:#1b2032"></div>
<div style="position:absolute;left:162.00px;top:956.00px;width:2240.00px;height:64.00px;background:#1f263a"></div>
<div style="position:absolute;left:162.00px;top:1020.00px;width:2240.00px;height:64.00px;background:#1b2032"></div>
<div style="position:absolute;left:162.00px;top:1084.00px;width:2240.00px;height:64.00px;background:#1f263a"></div>
<div style="position:absolute;left:162.00px;top:1148.00px;width:2240.00px;height:64.00px;background:#1b2032"></div>
<div style="position:absolute;left:162.00px;top:1212.00px;width:2240.00px;height:64.00px;background:#1f263a"></div>
<div style="position:absolute;left:162.00px;top:1276.00px;width:2240.00px;height:64.00px;background:#1b2032"></div>
<div style="position:absolute;left:162.00px;top:1340.00px;width:2240.00px;height:64.00px;background:#1f263a"></div>
<div style="position:absolute;left:162.00px;top:1404.00px;width:2240.00px;height:64.00px;background:#1b2032"></div>
<div style="position:absolute;left:162.00px;top:1468.00px;width:2240.00px;height:64.00px;background:#1f263a"></div>
<div style="position:absolute;left:989.80px;top:832.00px;width:2.00px;height:60.00px;background:repeating-linear-gradient(#fff 0 6px,transparent 6px 10.6px)"></div>
<div style="position:absolute;left:989.80px;top:892.00px;width:2.00px;height:64.00px;background:repeating-linear-gradient(#fff 0 6px,transparent 6px 10.6px)"></div>
<div style="position:absolute;left:989.80px;top:956.00px;width:2.00px;height:64.00px;background:repeating-linear-gradient(#fff 0 6px,transparent 6px 10.6px)"></div>
<div style="position:absolute;left:989.80px;top:1020.00px;width:2.00px;height:64.00px;background:repeating-linear-gradient(#fff 0 6px,transparent 6px 10.6px)"></div>
<div style="position:absolute;left:989.80px;top:1084.00px;width:2.00px;height:64.00px;background:repeating-linear-gradient(#fff 0 6px,transparent 6px 10.6px)"></div>
<div style="position:absolute;left:989.80px;top:1148.00px;width:2.00px;height:64.00px;background:repeating-linear-gradient(#fff 0 6px,transparent 6px 10.6px)"></div>
<div style="position:absolute;left:989.80px;top:1212.00px;width:2.00px;height:64.00px;background:repeating-linear-gradient(#fff 0 6px,transparent 6px 10.6px)"></div>
<div style="position:absolute;left:989.80px;top:1276.00px;width:2.00px;height:64.00px;background:repeating-linear-gradient(#fff 0 6px,transparent 6px 10.6px)"></div>
<div style="position:absolute;left:989.80px;top:1340.00px;width:2.00px;height:64.00px;background:repeating-linear-gradient(#fff 0 6px,transparent 6px 10.6px)"></div>
<div style="position:absolute;left:989.80px;top:1404.00px;width:2.00px;height:64.00px;background:repeating-linear-gradient(#fff 0 6px,transparent 6px 10.6px)"></div>
<div style="position:absolute;left:989.80px;top:1468.00px;width:2.00px;height:64.00px;background:repeating-linear-gradient(#fff 0 6px,transparent 6px 10.6px)"></div>
<div style="position:absolute;left:1289.80px;top:832.00px;width:2.00px;height:60.00px;background:repeating-linear-gradient(#fff 0 6px,transparent 6px 10.6px)"></div>
<div style="position:absolute;left:1289.80px;top:892.00px;width:2.00px;height:64.00px;background:repeating-linear-gradient(#fff 0 6px,transparent 6px 10.6px)"></div>
<div style="position:absolute;left:1289.80px;top:956.00px;width:2.00px;height:64.00px;background:repeating-linear-gradient(#fff 0 6px,transparent 6px 10.6px)"></div>
<div style="position:absolute;left:1289.80px;top:1020.00px;width:2.00px;height:64.00px;background:repeating-linear-gradient(#fff 0 6px,transparent 6px 10.6px)"></div>
<div style="position:absolute;left:1289.80px;top:1084.00px;width:2.00px;height:64.00px;background:repeating-linear-gradient(#fff 0 6px,transparent 6px 10.6px)"></div>
<div style="position:absolute;left:1289.80px;top:1148.00px;width:2.00px;height:64.00px;background:repeating-linear-gradient(#fff 0 6px,transparent 6px 10.6px)"></div>
<div style="position:absolute;left:1289.80px;top:1212.00px;width:2.00px;height:64.00px;background:repeating-linear-gradient(#fff 0 6px,transparent 6px 10.6px)"></div>
<div style="position:absolute;left:1289.80px;top:1276.00px;width:2.00px;height:64.00px;background:repeating-linear-gradient(#fff 0 6px,transparent 6px 10.6px)"></div>
<div style="position:absolute;left:1289.80px;top:1340.00px;width:2.00px;height:64.00px;background:repeating-linear-gradient(#fff 0 6px,transparent 6px 10.6px)"></div>
<div style="position:absolute;left:1289.80px;top:1404.00px;width:2.00px;height:64.00px;background:repeating-linear-gradient(#fff 0 6px,transparent 6px 10.6px)"></div>
<div style="position:absolute;left:1289.80px;top:1468.00px;width:2.00px;height:64.00px;background:repeating-linear-gradient(#fff 0 6px,transparent 6px 10.6px)"></div>
<div style="position:absolute;left:1458.20px;top:832.00px;width:2.00px;height:60.00px;background:repeating-linear-gradient(#fff 0 6px,transparent 6px 10.6px)"></div>
<div style="position:absolute;left:1458.20px;top:892.00px;width:2.00px;height:64.00px;background:repeating-linear-gradient(#fff 0 6px,transparent 6px 10.6px)"></div>
<div style="position:absolute;left:1458.20px;top:956.00px;width:2.00px;height:64.00px;background:repeating-linear-gradient(#fff 0 6px,transparent 6px 10.6px)"></div>
<div style="position:absolute;left:1458.20px;top:1020.00px;width:2.00px;height:64.00px;background:repeating-linear-gradient(#fff 0 6px,transparent 6px 10.6px)"></div>
<div style="position:absolute;left:1458.20px;top:1084.00px;width:2.00px;height:64.00px;background:repeating-linear-gradient(#fff 0 6px,transparent 6px 10.6px)"></div>
<div style="position:absolute;left:1458.20px;top:1148.00px;width:2.00px;height:64.00px;background:repeating-linear-gradient(#fff 0 6px,transparent 6px 10.6px)"></div>
<div style="position:absolute;left:1458.20px;top:1212.00px;width:2.00px;height:64.00px;background:repeating-linear-gradient(#fff 0 6px,transparent 6px 10.6px)"></div>
<div style="position:absolute;left:1458.20px;top:1276.00px;width:2.00px;height:64.00px;background:repeating-linear-gradient(#fff 0 6px,transparent 6px 10.6px)"></div>
<div style="position:absolute;left:1458.20px;top:1340.00px;width:2.00px;height:64.00px;background:repeating-linear-gradient(#fff 0 6px,transparent 6px 10.6px)"></div>
<div style="position:absolute;left:1458.20px;top:1404.00px;width:2.00px;height:64.00px;background:repeating-linear-gradient(#fff 0 6px,transparent 6px 10.6px)"></div>
<div style="position:absolute;left:1458.20px;top:1468.00px;width:2.00px;height:64.00px;background:repeating-linear-gradient(#fff 0 6px,transparent 6px 10.6px)"></div>
<div style="position:absolute;left:1758.20px;top:832.00px;width:2.00px;height:60.00px;background:repeating-linear-gradient(#fff 0 6px,transparent 6px 10.6px)"></div>
<div style="position:absolute;left:1758.20px;top:892.00px;width:2.00px;height:64.00px;background:repeating-linear-gradient(#fff 0 6px,transparent 6px 10.6px)"></div>
<div style="position:absolute;left:1758.20px;top:956.00px;width:2.00px;height:64.00px;background:repeating-linear-gradient(#fff 0 6px,transparent 6px 10.6px)"></div>
<div style="position:absolute;left:1758.20px;top:1020.00px;width:2.00px;height:64.00px;background:repeating-linear-gradient(#fff 0 6px,transparent 6px 10.6px)"></div>
<div style="position:absolute;left:1758.20px;top:1084.00px;width:2.00px;height:64.00px;background:repeating-linear-gradient(#fff 0 6px,transparent 6px 10.6px)"></div>
<div style="position:absolute;left:1758.20px;top:1148.00px;width:2.00px;height:64.00px;background:repeating-linear-gradient(#fff 0 6px,transparent 6px 10.6px)"></div>
<div style="position:absolute;left:1758.20px;top:1212.00px;width:2.00px;height:64.00px;background:repeating-linear-gradient(#fff 0 6px,transparent 6px 10.6px)"></div>
<div style="position:absolute;left:1758.20px;top:1276.00px;width:2.00px;height:64.00px;background:repeating-linear-gradient(#fff 0 6px,transparent 6px 10.6px)"></div>
<div style="position:absolute;left:1758.20px;top:1340.00px;width:2.00px;height:64.00px;background:repeating-linear-gradient(#fff 0 6px,transparent 6px 10.6px)"></div>
<div style="position:absolute;left:1758.20px;top:1404.00px;width:2.00px;height:64.00px;background:repeating-linear-gradient(#fff 0 6px,transparent 6px 10.6px)"></div>
<div style="position:absolute;left:1758.20px;top:1468.00px;width:2.00px;height:64.00px;background:repeating-linear-gradient(#fff 0 6px,transparent 6px 10.6px)"></div>
<div style="position:absolute;left:2058.20px;top:832.00px;width:2.00px;height:60.00px;background:repeating-linear-gradient(#fff 0 6px,transparent 6px 10.6px)"></div>
<div style="position:absolute;left:2058.20px;top:892.00px;width:2.00px;height:64.00px;background:repeating-linear-gradient(#fff 0 6px,transparent 6px 10.6px)"></div>
<div style="position:absolute;left:2058.20px;top:956.00px;width:2.00px;height:64.00px;background:repeating-linear-gradient(#fff 0 6px,transparent 6px 10.6px)"></div>
<div style="position:absolute;left:2058.20px;top:1020.00px;width:2.00px;height:64.00px;background:repeating-linear-gradient(#fff 0 6px,transparent 6px 10.6px)"></div>
<div style="position:absolute;left:2058.20px;top:1084.00px;width:2.00px;height:64.00px;background:repeating-linear-gradient(#fff 0 6px,transparent 6px 10.6px)"></div>
<div style="position:absolute;left:2058.20px;top:1148.00px;width:2.00px;height:64.00px;background:repeating-linear-gradient(#fff 0 6px,transparent 6px 10.6px)"></div>
<div style="position:absolute;left:2058.20px;top:1212.00px;width:2.00px;height:64.00px;background:repeating-linear-gradient(#fff 0 6px,transparent 6px 10.6px)"></div>
<div style="position:absolute;left:2058.20px;top:1276.00px;width:2.00px;height:64.00px;background:repeating-linear-gradient(#fff 0 6px,transparent 6px 10.6px)"></div>
<div style="position:absolute;left:2058.20px;top:1340.00px;width:2.00px;height:64.00px;background:repeating-linear-gradient(#fff 0 6px,transparent 6px 10.6px)"></div>
<div style="position:absolute;left:2058.20px;top:1404.00px;width:2.00px;height:64.00px;background:repeating-linear-gradient(#fff 0 6px,transparent 6px 10.6px)"></div>
<div style="position:absolute;left:2058.20px;top:1468.00px;width:2.00px;height:64.00px;background:repeating-linear-gradient(#fff 0 6px,transparent 6px 10.6px)"></div>
<div style="position:absolute;left:2358.20px;top:832.00px;width:2.00px;height:60.00px;background:repeating-linear-gradient(#fff 0 6px,transparent 6px 10.6px)"></div>
<div style="position:absolute;left:2358.20px;top:892.00px;width:2.00px;height:64.00px;background:repeating-linear-gradient(#fff 0 6px,transparent 6px 10.6px)"></div>
<div style="position:absolute;left:2358.20px;top:956.00px;width:2.00px;height:64.00px;background:repeating-linear-gradient(#fff 0 6px,transparent 6px 10.6px)"></div>
<div style="position:absolute;left:2358.20px;top:1020.00px;width:2.00px;height:64.00px;background:repeating-linear-gradient(#fff 0 6px,transparent 6px 10.6px)"></div>
<div style="position:absolute;left:2358.20px;top:1084.00px;width:2.00px;height:64.00px;background:repeating-linear-gradient(#fff 0 6px,transparent 6px 10.6px)"></div>
<div style="position:absolute;left:2358.20px;top:1148.00px;width:2.00px;height:64.00px;background:repeating-linear-gradient(#fff 0 6px,transparent 6px 10.6px)"></div>
<div style="position:absolute;left:2358.20px;top:1212.00px;width:2.00px;height:64.00px;background:repeating-linear-gradient(#fff 0 6px,transparent 6px 10.6px)"></div>
<div style="position:absolute;left:2358.20px;top:1276.00px;width:2.00px;height:64.00px;background:repeating-linear-gradient(#fff 0 6px,transparent 6px 10.6px)"></div>
<div style="position:absolute;left:2358.20px;top:1340.00px;width:2.00px;height:64.00px;background:repeating-linear-gradient(#fff 0 6px,transparent 6px 10.6px)"></div>
<div style="position:absolute;left:2358.20px;top:1404.00px;width:2.00px;height:64.00px;background:repeating-linear-gradient(#fff 0 6px,transparent 6px 10.6px)"></div>
<div style="position:absolute;left:2358.20px;top:1468.00px;width:2.00px;height:64.00px;background:repeating-linear-gradient(#fff 0 6px,transparent 6px 10.6px)"></div>
<span class="t" style="left:174.14px;top:913.75px;font-size:24.626px;line-height:24.626px;color:#fff;font-weight:normal;letter-spacing:1.732px;"><u style="text-decoration-thickness:2px;text-underline-offset:1.5px">loadgenerator-54db677df6-wfzrt-pod-boutique-bc-gke-boutiqu</u><span style="letter-spacing:-0.6px">...</span></span>
<div style="position:absolute;left:1004.00px;top:903.50px;width:273.50px;height:41.50px;background:#93bf6b;border:2px solid #e0e1e6;border-radius:6px;box-sizing:border-box"></div>
<svg style="position:absolute;left:0;top:0;overflow:visible" width="1" height="1"><polygon points="1141.28,916.70 1144.40,916.70 1144.40,934.20 1140.97,934.20 1140.97,920.29 1136.60,921.16 1136.60,918.89" fill="#161b2a"/></svg>
<svg style="position:absolute;left:0;top:0;overflow:visible" width="1" height="1"><polygon points="1308.44,916.00 1311.40,916.00 1311.40,934.20 1308.14,934.20 1308.14,919.73 1304.00,920.64 1304.00,918.27" fill="#fff"/></svg>
<span class="t" style="left:1473.31px;top:913.19px;font-size:25.291px;line-height:25.291px;color:#fff;font-weight:normal;letter-spacing:0.000px;">0</span>
<span class="t" style="left:1773.31px;top:913.19px;font-size:25.291px;line-height:25.291px;color:#fff;font-weight:normal;letter-spacing:0.000px;">0</span>
<span class="t" style="left:2073.51px;top:913.19px;font-size:25.291px;line-height:25.291px;color:#fff;font-weight:normal;letter-spacing:0.000px;">0</span>
<span class="t" style="left:2372.13px;top:913.19px;font-size:25.291px;line-height:25.291px;color:#fff;font-weight:normal;letter-spacing:0.000px;">Na</span>
<span class="t" style="left:174.14px;top:977.75px;font-size:24.626px;line-height:24.626px;color:#fff;font-weight:normal;letter-spacing:1.489px;"><u style="text-decoration-thickness:2px;text-underline-offset:1.5px">kube-dns-autoscaler-5f56f8997c-l55pc-pod-kube-system-bc-gk</u><span style="letter-spacing:-0.6px">...</span></span>
<div style="position:absolute;left:1004.00px;top:967.50px;width:273.50px;height:41.50px;background:#93bf6b;border:2px solid #e0e1e6;border-radius:6px;box-sizing:border-box"></div>
<svg style="position:absolute;left:0;top:0;overflow:visible" width="1" height="1"><polygon points="1141.28,980.70 1144.40,980.70 1144.40,998.20 1140.97,998.20 1140.97,984.29 1136.60,985.16 1136.60,982.89" fill="#161b2a"/></svg>
<svg style="position:absolute;left:0;top:0;overflow:visible" width="1" height="1"><polygon points="1308.44,980.00 1311.40,980.00 1311.40,998.20 1308.14,998.20 1308.14,983.73 1304.00,984.64 1304.00,982.27" fill="#fff"/></svg>
<span class="t" style="left:1473.31px;top:977.19px;font-size:25.291px;line-height:25.291px;color:#fff;font-weight:normal;letter-spacing:0.000px;">0</span>
<span class="t" style="left:1773.31px;top:977.19px;font-size:25.291px;line-height:25.291px;color:#fff;font-weight:normal;letter-spacing:0.000px;">0</span>
<span class="t" style="left:2073.51px;top:977.19px;font-size:25.291px;line-height:25.291px;color:#fff;font-weight:normal;letter-spacing:0.000px;">0</span>
<span class="t" style="left:2372.13px;top:977.19px;font-size:25.291px;line-height:25.291px;color:#fff;font-weight:normal;letter-spacing:0.000px;">Na</span>
<span class="t" style="left:174.14px;top:1041.75px;font-size:24.626px;line-height:24.626px;color:#fff;font-weight:normal;letter-spacing:1.542px;"><u style="text-decoration-thickness:2px;text-underline-offset:1.5px">konnectivity-agent-84b869ff76-x26kw-pod-kube-system-bc-gke-</u><span style="letter-spacing:-0.6px">...</span></span>
<div style="position:absolute;left:1004.00px;top:1031.50px;width:273.50px;height:41.50px;background:#93bf6b;border:2px solid #e0e1e6;border-radius:6px;box-sizing:border-box"></div>
<svg style="position:absolute;left:0;top:0;overflow:visible" width="1" height="1"><polygon points="1141.28,1044.70 1144.40,1044.70 1144.40,1062.20 1140.97,1062.20 1140.97,1048.29 1136.60,1049.16 1136.60,1046.89" fill="#161b2a"/></svg>
<svg style="position:absolute;left:0;top:0;overflow:visible" width="1" height="1"><polygon points="1308.44,1044.00 1311.40,1044.00 1311.40,1062.20 1308.14,1062.20 1308.14,1047.73 1304.00,1048.64 1304.00,1046.28" fill="#fff"/></svg>
<span class="t" style="left:1473.31px;top:1041.19px;font-size:25.291px;line-height:25.291px;color:#fff;font-weight:normal;letter-spacing:0.000px;">0</span>
<span class="t" style="left:1773.31px;top:1041.19px;font-size:25.291px;line-height:25.291px;color:#fff;font-weight:normal;letter-spacing:0.000px;">0</span>
<span class="t" style="left:2073.51px;top:1041.19px;font-size:25.291px;line-height:25.291px;color:#fff;font-weight:normal;letter-spacing:0.000px;">0</span>
<span class="t" style="left:2372.13px;top:1041.19px;font-size:25.291px;line-height:25.291px;color:#fff;font-weight:normal;letter-spacing:0.000px;">Na</span>
<span class="t" style="left:174.75px;top:1105.75px;font-size:24.626px;line-height:24.626px;color:#fff;font-weight:normal;letter-spacing:1.543px;"><u style="text-decoration-thickness:2px;text-underline-offset:1.5px">event-exporter-gke-65d5fddbb6-g2csn-pod-kube-system-bc-gk</u><span style="letter-spacing:-0.6px">...</span></span>
<div style="position:absolute;left:1004.00px;top:1095.50px;width:273.50px;height:41.50px;background:#93bf6b;border:2px solid #e0e1e6;border-radius:6px;box-sizing:border-box"></div>
<svg style="position:absolute;left:0;top:0;overflow:visible" width="1" height="1"><polygon points="1141.28,1108.70 1144.40,1108.70 1144.40,1126.20 1140.97,1126.20 1140.97,1112.29 1136.60,1113.16 1136.60,1110.89" fill="#161b2a"/></svg>
<svg style="position:absolute;left:0;top:0;overflow:visible" width="1" height="1"><polygon points="1308.44,1108.00 1311.40,1108.00 1311.40,1126.20 1308.14,1126.20 1308.14,1111.73 1304.00,1112.64 1304.00,1110.28" fill="#fff"/></svg>
<span class="t" style="left:1473.31px;top:1105.19px;font-size:25.291px;line-height:25.291px;color:#fff;font-weight:normal;letter-spacing:0.000px;">0</span>
<span class="t" style="left:1773.31px;top:1105.19px;font-size:25.291px;line-height:25.291px;color:#fff;font-weight:normal;letter-spacing:0.000px;">0</span>
<span class="t" style="left:2073.51px;top:1105.19px;font-size:25.291px;line-height:25.291px;color:#fff;font-weight:normal;letter-spacing:0.000px;">0</span>
<span class="t" style="left:2372.13px;top:1105.19px;font-size:25.291px;line-height:25.291px;color:#fff;font-weight:normal;letter-spacing:0.000px;">Na</span>
<span class="t" style="left:174.14px;top:1169.75px;font-size:24.626px;line-height:24.626px;color:#fff;font-weight:normal;letter-spacing:1.606px;"><u style="text-decoration-thickness:2px;text-underline-offset:1.5px">lmotel-0-pod-logicmonitor-bc-gke-boutique01</u></span>
<div style="position:absolute;left:1004.00px;top:1159.50px;width:273.50px;height:41.50px;background:#93bf6b;border:2px solid #e0e1e6;border-radius:6px;box-sizing:border-box"></div>
<svg style="position:absolute;left:0;top:0;overflow:visible" width="1" height="1"><polygon points="1141.28,1172.70 1144.40,1172.70 1144.40,1190.20 1140.97,1190.20 1140.97,1176.29 1136.60,1177.16 1136.60,1174.89" fill="#161b2a"/></svg>
<svg style="position:absolute;left:0;top:0;overflow:visible" width="1" height="1"><polygon points="1308.44,1172.00 1311.40,1172.00 1311.40,1190.20 1308.14,1190.20 1308.14,1175.73 1304.00,1176.64 1304.00,1174.28" fill="#fff"/></svg>
<span class="t" style="left:1473.31px;top:1169.19px;font-size:25.291px;line-height:25.291px;color:#fff;font-weight:normal;letter-spacing:0.000px;">0</span>
<span class="t" style="left:1773.31px;top:1169.19px;font-size:25.291px;line-height:25.291px;color:#fff;font-weight:normal;letter-spacing:0.000px;">0</span>
<span class="t" style="left:2073.51px;top:1169.19px;font-size:25.291px;line-height:25.291px;color:#fff;font-weight:normal;letter-spacing:0.000px;">0</span>
<span class="t" style="left:2372.13px;top:1169.19px;font-size:25.291px;line-height:25.291px;color:#fff;font-weight:normal;letter-spacing:0.000px;">Na</span>
<span class="t" style="left:174.16px;top:1233.75px;font-size:24.626px;line-height:24.626px;color:#fff;font-weight:normal;letter-spacing:1.510px;"><u style="text-decoration-thickness:2px;text-underline-offset:1.5px">recommendationservice-589949f897-jtchv-pod-boutique-bc-gke</u><span style="letter-spacing:-0.6px">...</span></span>
<div style="position:absolute;left:1004.00px;top:1223.50px;width:273.50px;height:41.50px;background:#93bf6b;border:2px solid #e0e1e6;border-radius:6px;box-sizing:border-box"></div>
<svg style="position:absolute;left:0;top:0;overflow:visible" width="1" height="1"><polygon points="1141.28,1236.70 1144.40,1236.70 1144.40,1254.20 1140.97,1254.20 1140.97,1240.29 1136.60,1241.16 1136.60,1238.89" fill="#161b2a"/></svg>
<svg style="position:absolute;left:0;top:0;overflow:visible" width="1" height="1"><polygon points="1308.44,1236.00 1311.40,1236.00 1311.40,1254.20 1308.14,1254.20 1308.14,1239.73 1304.00,1240.64 1304.00,1238.28" fill="#fff"/></svg>
<span class="t" style="left:1473.31px;top:1233.19px;font-size:25.291px;line-height:25.291px;color:#fff;font-weight:normal;letter-spacing:0.000px;">0</span>
<span class="t" style="left:1773.31px;top:1233.19px;font-size:25.291px;line-height:25.291px;color:#fff;font-weight:normal;letter-spacing:0.000px;">0</span>
<span class="t" style="left:2073.51px;top:1233.19px;font-size:25.291px;line-height:25.291px;color:#fff;font-weight:normal;letter-spacing:0.000px;">0</span>
<span class="t" style="left:2372.13px;top:1233.19px;font-size:25.291px;line-height:25.291px;color:#fff;font-weight:normal;letter-spacing:0.000px;">Na</span>
<span class="t" style="left:174.14px;top:1297.75px;font-size:24.626px;line-height:24.626px;color:#fff;font-weight:normal;letter-spacing:1.408px;"><u style="text-decoration-thickness:2px;text-underline-offset:1.5px">konnectivity-agent-autoscaler-864fff96c4-qnp77-pod-kube-syste</u><span style="letter-spacing:-0.6px">...</span></span>
<div style="position:absolute;left:1004.00px;top:1287.50px;width:273.50px;height:41.50px;background:#93bf6b;border:2px solid #e0e1e6;border-radius:6px;box-sizing:border-box"></div>
<svg style="position:absolute;left:0;top:0;overflow:visible" width="1" height="1"><polygon points="1141.28,1300.70 1144.40,1300.70 1144.40,1318.20 1140.97,1318.20 1140.97,1304.29 1136.60,1305.16 1136.60,1302.89" fill="#161b2a"/></svg>
<svg style="position:absolute;left:0;top:0;overflow:visible" width="1" height="1"><polygon points="1308.44,1300.00 1311.40,1300.00 1311.40,1318.20 1308.14,1318.20 1308.14,1303.73 1304.00,1304.64 1304.00,1302.28" fill="#fff"/></svg>
<span class="t" style="left:1473.31px;top:1297.19px;font-size:25.291px;line-height:25.291px;color:#fff;font-weight:normal;letter-spacing:0.000px;">0</span>
<span class="t" style="left:1773.31px;top:1297.19px;font-size:25.291px;line-height:25.291px;color:#fff;font-weight:normal;letter-spacing:0.000px;">0</span>
<span class="t" style="left:2073.51px;top:1297.19px;font-size:25.291px;line-height:25.291px;color:#fff;font-weight:normal;letter-spacing:0.000px;">0</span>
<span class="t" style="left:2372.13px;top:1297.19px;font-size:25.291px;line-height:25.291px;color:#fff;font-weight:normal;letter-spacing:0.000px;">Na</span>
<span class="t" style="left:174.14px;top:1361.75px;font-size:24.626px;line-height:24.626px;color:#fff;font-weight:normal;letter-spacing:1.739px;"><u style="text-decoration-thickness:2px;text-underline-offset:1.5px">kube-dns-bbcc4f5b9-8gwq6-pod-kube-system-bc-gke-boutique</u><span style="letter-spacing:-0.6px">...</span></span>
<div style="position:absolute;left:1004.00px;top:1351.50px;width:273.50px;height:41.50px;background:#93bf6b;border:2px solid #e0e1e6;border-radius:6px;box-sizing:border-box"></div>
<svg style="position:absolute;left:0;top:0;overflow:visible" width="1" height="1"><polygon points="1141.28,1364.70 1144.40,1364.70 1144.40,1382.20 1140.97,1382.20 1140.97,1368.29 1136.60,1369.16 1136.60,1366.89" fill="#161b2a"/></svg>
<svg style="position:absolute;left:0;top:0;overflow:visible" width="1" height="1"><polygon points="1308.44,1364.00 1311.40,1364.00 1311.40,1382.20 1308.14,1382.20 1308.14,1367.73 1304.00,1368.64 1304.00,1366.28" fill="#fff"/></svg>
<span class="t" style="left:1473.31px;top:1361.19px;font-size:25.291px;line-height:25.291px;color:#fff;font-weight:normal;letter-spacing:0.000px;">0</span>
<span class="t" style="left:1773.31px;top:1361.19px;font-size:25.291px;line-height:25.291px;color:#fff;font-weight:normal;letter-spacing:0.000px;">0</span>
<span class="t" style="left:2073.51px;top:1361.19px;font-size:25.291px;line-height:25.291px;color:#fff;font-weight:normal;letter-spacing:0.000px;">0</span>
<span class="t" style="left:2372.13px;top:1361.19px;font-size:25.291px;line-height:25.291px;color:#fff;font-weight:normal;letter-spacing:0.000px;">Na</span>
<span class="t" style="left:174.75px;top:1425.75px;font-size:24.626px;line-height:24.626px;color:#fff;font-weight:normal;letter-spacing:1.577px;"><u style="text-decoration-thickness:2px;text-underline-offset:1.5px">currencyservice-5f8bd86cdc-x9bvv-pod-boutique-bc-gke-boutiq</u><span style="letter-spacing:-0.6px">...</span></span>
<div style="position:absolute;left:1004.00px;top:1415.50px;width:273.50px;height:41.50px;background:#93bf6b;border:2px solid #e0e1e6;border-radius:6px;box-sizing:border-box"></div>
<svg style="position:absolute;left:0;top:0;overflow:visible" width="1" height="1"><polygon points="1141.28,1428.70 1144.40,1428.70 1144.40,1446.20 1140.97,1446.20 1140.97,1432.29 1136.60,1433.16 1136.60,1430.89" fill="#161b2a"/></svg>
<svg style="position:absolute;left:0;top:0;overflow:visible" width="1" height="1"><polygon points="1308.44,1428.00 1311.40,1428.00 1311.40,1446.20 1308.14,1446.20 1308.14,1431.73 1304.00,1432.64 1304.00,1430.28" fill="#fff"/></svg>
<span class="t" style="left:1473.31px;top:1425.19px;font-size:25.291px;line-height:25.291px;color:#fff;font-weight:normal;letter-spacing:0.000px;">0</span>
<span class="t" style="left:1773.31px;top:1425.19px;font-size:25.291px;line-height:25.291px;color:#fff;font-weight:normal;letter-spacing:0.000px;">0</span>
<span class="t" style="left:2073.51px;top:1425.19px;font-size:25.291px;line-height:25.291px;color:#fff;font-weight:normal;letter-spacing:0.000px;">0</span>
<span class="t" style="left:2372.13px;top:1425.19px;font-size:25.291px;line-height:25.291px;color:#fff;font-weight:normal;letter-spacing:0.000px;">Na</span>
<span class="t" style="left:174.75px;top:1489.75px;font-size:24.626px;line-height:24.626px;color:#fff;font-weight:normal;letter-spacing:1.437px;"><u style="text-decoration-thickness:2px;text-underline-offset:1.5px">cartservice-c96b77bdc-cz475-pod-boutique-bc-gke-boutique01</u></span>
<div style="position:absolute;left:1004.00px;top:1479.50px;width:273.50px;height:41.50px;background:#93bf6b;border:2px solid #e0e1e6;border-radius:6px;box-sizing:border-box"></div>
<svg style="position:absolute;left:0;top:0;overflow:visible" width="1" height="1"><polygon points="1141.28,1492.70 1144.40,1492.70 1144.40,1510.20 1140.97,1510.20 1140.97,1496.29 1136.60,1497.16 1136.60,1494.89" fill="#161b2a"/></svg>
<svg style="position:absolute;left:0;top:0;overflow:visible" width="1" height="1"><polygon points="1308.44,1492.00 1311.40,1492.00 1311.40,1510.20 1308.14,1510.20 1308.14,1495.73 1304.00,1496.64 1304.00,1494.28" fill="#fff"/></svg>
<span class="t" style="left:1473.31px;top:1489.19px;font-size:25.291px;line-height:25.291px;color:#fff;font-weight:normal;letter-spacing:0.000px;">0</span>
<span class="t" style="left:1773.31px;top:1489.19px;font-size:25.291px;line-height:25.291px;color:#fff;font-weight:normal;letter-spacing:0.000px;">0</span>
<span class="t" style="left:2073.23px;top:1489.19px;font-size:25.291px;line-height:25.291px;color:#fff;font-weight:normal;letter-spacing:0.000px;">2</span>
<span class="t" style="left:2372.13px;top:1489.19px;font-size:25.291px;line-height:25.291px;color:#fff;font-weight:normal;letter-spacing:0.000px;">Na</span>
<div style="position:absolute;left:2402.00px;top:832.00px;width:18.00px;height:700.00px;background:#1f263a"></div>
<div style="position:absolute;left:126.00px;top:1530.00px;width:2760.00px;height:2.00px;background:#d9dadd"></div>
</body></html>
